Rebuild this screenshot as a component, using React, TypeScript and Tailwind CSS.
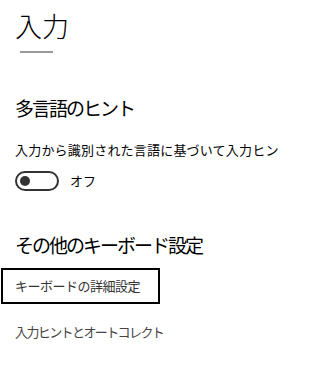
export default function App() {
  const font = { fontFamily: '"Noto Sans CJK JP", "Noto Sans", sans-serif' };
  return (
    <div className="w-[278px] h-[371px] bg-white overflow-hidden text-black" style={font}>
      <div className="pl-[15px] pt-[8px]">
        <h1 className="text-[27px] leading-[36px] font-light">入力</h1>
        <div className="ml-[5px] mt-[7px] w-[33px] h-[2px] bg-[#999]" />
      </div>
      <div className="pl-[15px] mt-[42px]">
        <h2 className="text-[19px] leading-[26px] tracking-[-2px]">多言語のヒント</h2>
        <p className="mt-[20px] text-[13px] leading-[18px] tracking-[0.2px] whitespace-nowrap">入力から識別された言語に基づいて入力ヒント</p>
        <div className="mt-[12px] flex items-center">
          <div className="w-[44px] h-[20px] rounded-full border-2 border-[#333] flex items-center pl-[3px]">
            <div className="w-[10px] h-[10px] rounded-full bg-[#333]" />
          </div>
          <span className="ml-[11px] text-[13px] leading-[18px]">オフ</span>
        </div>
        <h2 className="mt-[41px] text-[19px] leading-[26px] tracking-[-2px]">その他のキーボード設定</h2>
      </div>
      <div className="mt-[10px] ml-[1px] w-[159px] h-[36px] border-2 border-black flex items-center pl-[12px]">
        <span className="text-[13px] leading-[18px] tracking-[-0.5px] text-[#333]">キーボードの詳細設定</span>
      </div>
      <div className="pl-[15px] mt-[14px]">
        <span className="text-[13px] leading-[18px] tracking-[-1.6px] text-[#444]">入力ヒントとオートコレクト</span>
      </div>
    </div>
  );
}
